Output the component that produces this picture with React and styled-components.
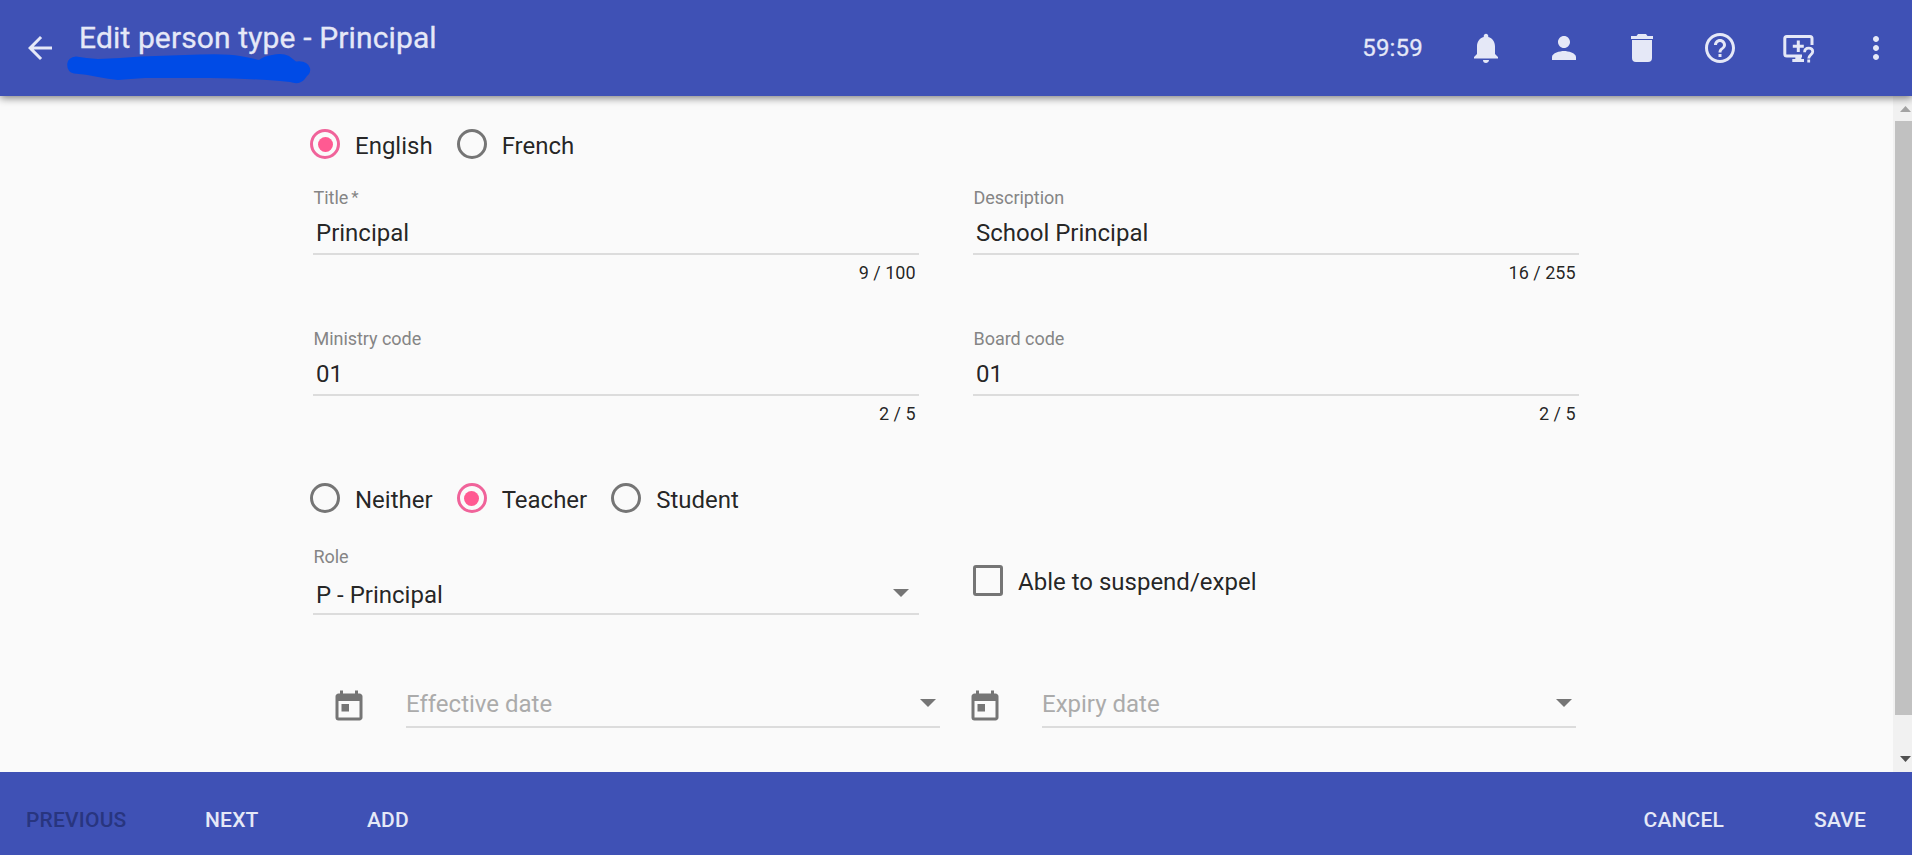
import React from 'react';
import styled, { createGlobalStyle } from 'styled-components';
import {
  MdArrowBack, MdNotifications, MdPerson, MdHelpOutline, MdMoreVert, MdToday,
} from 'react-icons/md';

const Global = createGlobalStyle`
  * { box-sizing: border-box; }
  body { margin: 0; background: #fafafa; font-family: Roboto, "Liberation Sans", sans-serif; color: rgba(0,0,0,.87); }
`;

const Page = styled.div`
  display: flex;
  flex-direction: column;
  height: 855px;
  overflow: hidden;
`;

const Header = styled.header`
  position: relative;
  z-index: 1;
  display: flex;
  align-items: center;
  height: 96px;
  flex: none;
  padding: 0 18px 0 22px;
  background: #3f51b5;
  color: #e5e8f7;
  box-shadow: 0 2px 8px rgba(0,0,0,.5);
`;

const Title = styled.h1`
  margin: 0 auto 20px 21px;
  font-size: 30px;
  line-height: 36px;
  font-weight: 400;
  letter-spacing: .13px;
  white-space: nowrap;
  -webkit-text-stroke: .3px currentColor;
`;

const Actions = styled.div`
  display: flex;
  align-items: center;
  gap: 42px;
`;

const Timer = styled.span`
  font-size: 24px;
  line-height: 36px;
  letter-spacing: .2px;
  margin-right: 3px;
  -webkit-text-stroke: .3px currentColor;
`;

const Marker = styled.svg`
  position: absolute;
  left: 60px;
  top: 48px;
`;

const Main = styled.main`
  display: flex;
  flex: 1;
  min-height: 0;
`;

const Form = styled.form`
  flex: 1;
  padding: 31px 0 0 313px;
`;

const Row = styled.div`
  display: flex;
  gap: 54px;
  height: ${p => p.$height}px;
`;

const RadioRow = styled.div`
  display: flex;
  gap: 24px;
  margin-left: -3px;
  height: ${p => p.$height}px;
  padding-top: 2px;
`;

const Choice = styled.label`
  display: flex;
  align-items: flex-start;
  gap: 15px;
  font-size: 24px;
  line-height: 34px;
  white-space: nowrap;
`;

const Dial = styled.span`
  display: flex;
  align-items: center;
  justify-content: center;
  width: 30px;
  height: 30px;
  border: 3px solid ${p => (p.$on ? '#f0639a' : '#757575')};
  border-radius: 50%;
  &::after {
    content: '';
    width: 15px;
    height: 15px;
    border-radius: 50%;
    background: ${p => (p.$on ? '#ff5a92' : 'transparent')};
  }
`;

const Box = styled.span`
  width: 30px;
  height: 31px;
  border: 3px solid #757575;
  border-radius: 3px;
`;

const Cell = styled.div`
  width: 606px;
`;

const Caption = styled.div`
  height: 26px;
  padding-left: .5px;
  font-size: 18px;
  line-height: 22px;
  letter-spacing: -.04px;
  color: #858585;
  sup { font-size: 17px; line-height: 0; vertical-align: 1px; margin-left: 3px; }
`;

const Value = styled.div`
  display: flex;
  align-items: center;
  justify-content: space-between;
  height: ${p => p.$height || 42}px;
  padding: ${p => p.$pad || '0 3px'};
  border-bottom: 2px solid #dcdcdc;
  font-size: 24px;
  line-height: 30px;
  color: ${p => (p.$empty ? '#ababab' : 'rgba(0,0,0,.87)')};
`;

const Count = styled.div`
  padding: 7px 3.500px 0 0;
  text-align: right;
  font-size: 18px;
  line-height: 22px;
`;

const Caret = styled.span`
  border: 8px solid transparent;
  border-top: 8px solid #757575;
  border-bottom: 0;
  margin-right: ${p => p.$right || 0}px;
  margin-bottom: ${p => p.$lift || 0}px;
`;

const CheckCell = styled.div`
  padding-top: 19px;
`;

const DateGroup = styled.div`
  display: flex;
  gap: 39px;
  color: #757575;
`;

const DateRow = styled.div`
  display: flex;
  gap: 27px;
  padding-left: 18px;
`;

const DateInput = styled.div`
  width: 534px;
`;

const Scroll = styled.div`
  display: flex;
  flex-direction: column;
  align-items: flex-end;
  width: 19px;
  background: #f1f1f1;
`;

const Thumb = styled.div`
  width: 17px;
  height: 594px;
  background: #c1c1c1;
`;

const ScrollArrow = styled.svg`
  display: block;
  width: 17px;
  height: ${p => p.$height}px;
`;

const Footer = styled.footer`
  display: flex;
  flex: none;
  height: 83px;
  padding: 32px 46px 0 26px;
  background: #3f51b5;
`;

const Action = styled.button`
  width: ${p => p.$width || 'auto'};
  height: 32px;
  padding: 0;
  margin-left: ${p => p.$left || 0};
  border: 0;
  background: none;
  text-align: left;
  font: 500 21px/32px Roboto, sans-serif;
  letter-spacing: .2px;
  color: ${p => (p.disabled ? '#28357f' : '#e5e8f7')};
`;

function TrashIcon() {
  return (
    <svg width="36" height="36" viewBox="0 0 36 36" fill="currentColor">
      <path d="M7 6H12.500L14 4H22L23.500 6H29V9H7ZM8 10H28V28Q28 32 24 32H12Q8 32 8 28Z" />
    </svg>
  );
}

function ScreenHelpIcon() {
  return (
    <svg width="36" height="36" viewBox="0 0 36 36" fill="none" stroke="currentColor" strokeWidth="3">
      <path d="M22 26H6.800Q4.800 26 4.800 24V8.500Q4.800 6.500 6.800 6.500H30Q32 6.500 32 8.500V15" />
      <path d="M18.300 10.500V22M12.800 16.200H23.800M12.300 30.500H24" />
      <path d="M18.300 25V31" strokeWidth="6" />
      <path d="M24.600 22.300Q24.600 18.200 28.700 18.200T32.700 21.800C32.700 24.600 28.700 25 28.700 28.400M28.700 29.600V32.400" strokeWidth="2.800" />
    </svg>
  );
}

function Radio({ on, children }) {
  return <Choice><Dial $on={on} />{children}</Choice>;
}

function Field({ label, required, value, count }) {
  return (
    <Cell>
      <Caption>{label}{required && <sup>*</sup>}</Caption>
      <Value>{value}</Value>
      <Count>{count}</Count>
    </Cell>
  );
}

function DateField({ label }) {
  return (
    <DateGroup>
      <MdToday size={36} />
      <DateInput>
        <Value $empty $height={39} $pad="0 4px 7px 0">{label}<Caret $lift={2} /></Value>
      </DateInput>
    </DateGroup>
  );
}

export default function App() {
  return (
    <Page>
      <Global />
      <Header>
        <MdArrowBack size={36} />
        <Title>Edit person type - Principal</Title>
        <Actions>
          <Timer>59:59</Timer>
          <MdNotifications size={36} />
          <MdPerson size={36} />
          <TrashIcon />
          <MdHelpOutline size={36} />
          <ScreenHelpIcon />
          <MdMoreVert size={36} />
        </Actions>
        <Marker width="256" height="38" viewBox="0 0 256 38">
          <path fill="#004be6" d="M16 8.500Q26 10 38 11Q60 10 81 8.500Q110 7.500 140 6.500Q168 5.500 180 8Q190 9.500 199 12Q204 8 212 7Q222 4.500 229 8L236 13.500Q247 12 250 20Q251 25 247 28L244 32Q239 37 230 34L220 33Q190 30.500 150 30Q115 30 85 30Q70 31 58 32Q48 31 38 29Q26 26 14 25.500Q7 24 7.200 16Q8 9 16 8.500Z" />
        </Marker>
      </Header>
      <Main>
        <Form>
          <RadioRow $height={60}>
            <Radio on>English</Radio>
            <Radio>French</Radio>
          </RadioRow>
          <Row $height={141}>
            <Field label="Title" required value="Principal" count="9 / 100" />
            <Field label="Description" value="School Principal" count="16 / 255" />
          </Row>
          <Row $height={153}>
            <Field label="Ministry code" value="01" count="2 / 5" />
            <Field label="Board code" value="01" count="2 / 5" />
          </Row>
          <RadioRow $height={65}>
            <Radio>Neither</Radio>
            <Radio on>Teacher</Radio>
            <Radio>Student</Radio>
          </RadioRow>
          <Row $height={143}>
            <Cell>
              <Caption>Role</Caption>
              <Value $height={43} $pad="5px 3px 0">P - Principal<Caret $right={7} $lift={4} /></Value>
            </Cell>
            <CheckCell>
              <Choice><Box />Able to suspend/expel</Choice>
            </CheckCell>
          </Row>
          <DateRow>
            <DateField label="Effective date" />
            <DateField label="Expiry date" />
          </DateRow>
        </Form>
        <Scroll>
          <ScrollArrow $height={25}><path d="M5 16L10.500 10L16 16Z" fill="#a3a3a3" /></ScrollArrow>
          <Thumb />
          <ScrollArrow $height={57}><path d="M5 41L10.500 47L16 41Z" fill="#505050" /></ScrollArrow>
        </Scroll>
      </Main>
      <Footer>
        <Action disabled $width="179px">PREVIOUS</Action>
        <Action $width="162px">NEXT</Action>
        <Action>ADD</Action>
        <Action $left="auto" $width="170.5px">CANCEL</Action>
        <Action>SAVE</Action>
      </Footer>
    </Page>
  );
}
